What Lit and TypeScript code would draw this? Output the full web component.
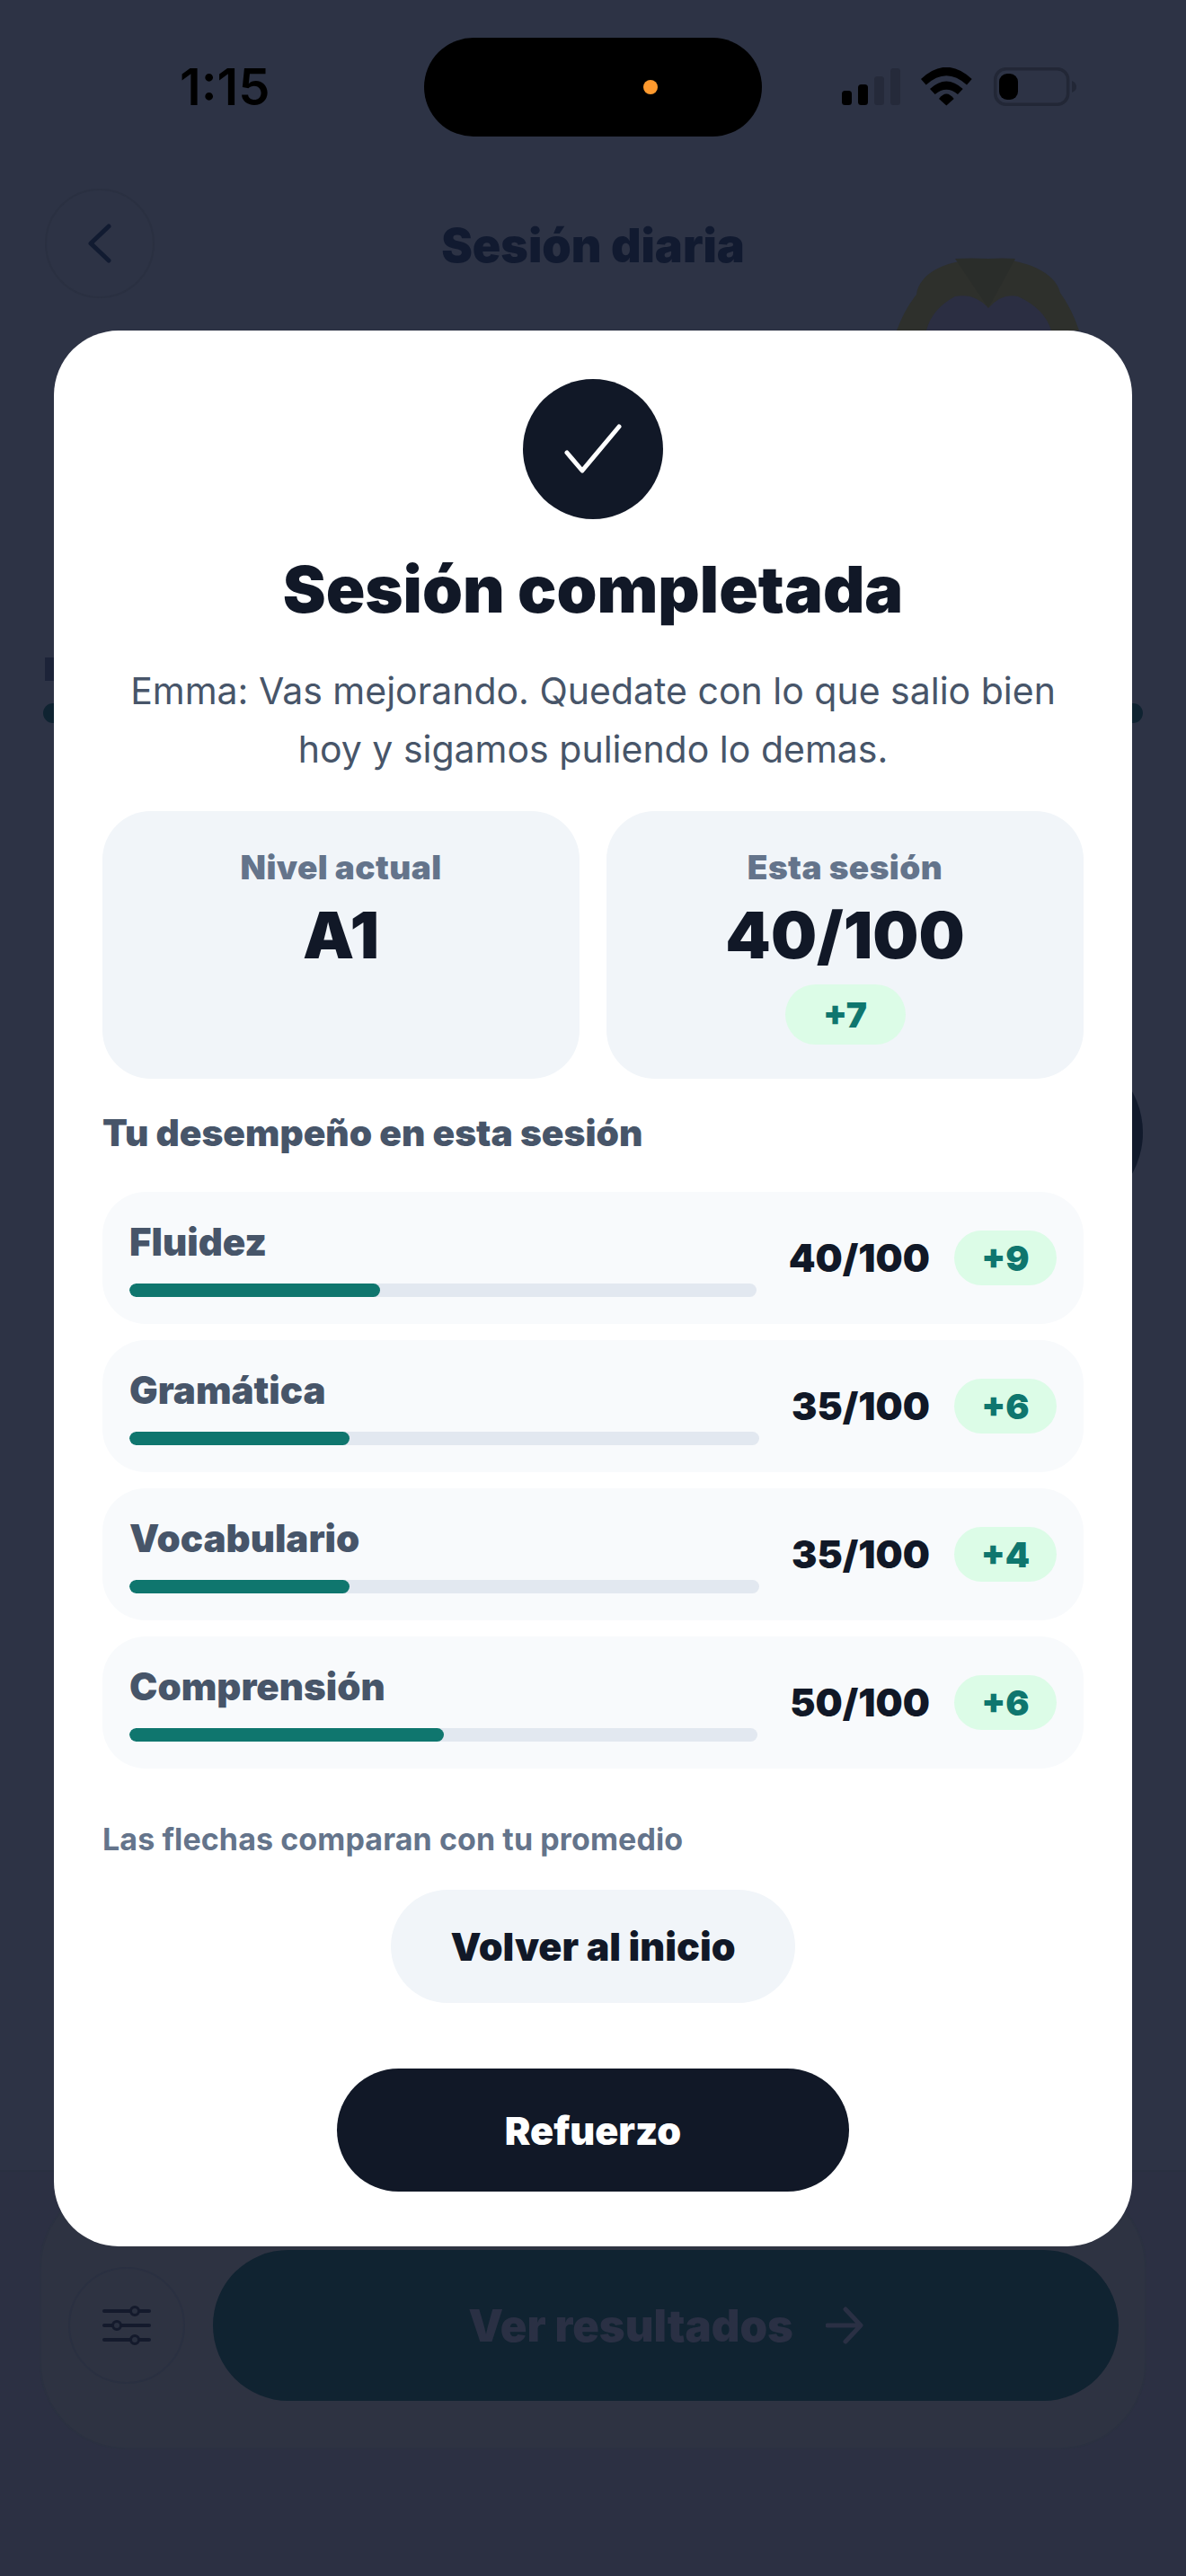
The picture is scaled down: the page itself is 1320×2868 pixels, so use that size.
import { LitElement, html, css, svg } from "lit";
import { customElement } from "lit/decorators.js";

const ROWS = [
  { name: "Fluidez", score: 40, delta: 9 },
  { name: "Gramática", score: 35, delta: 6 },
  { name: "Vocabulario", score: 35, delta: 4 },
  { name: "Comprensión", score: 50, delta: 6 },
];

@customElement("app-root")
export class AppRoot extends LitElement {
  static styles = css`
    :host {
      display: block;
      width: 1320px;
      height: 2868px;
      position: relative;
      overflow: hidden;
      background: #2d3345;
      font-family: Inter, "Liberation Sans", sans-serif;
    }
    .page {
      height: 2868px;
      display: flex;
      flex-direction: column;
    }
    .status {
      height: 194px;
      padding: 42px 0 0 200px;
      box-sizing: border-box;
      display: flex;
      align-items: flex-start;
    }
    .time {
      width: 272px;
      height: 110px;
      display: flex;
      align-items: center;
      font-size: 56px;
      font-weight: 600;
      color: #000;
    }
    .island {
      width: 376px;
      height: 110px;
      border-radius: 55px;
      background: #000;
      display: flex;
      align-items: center;
      padding-left: 244px;
      box-sizing: border-box;
      flex: none;
    }
    .dot {
      width: 16px;
      height: 16px;
      border-radius: 50%;
      background: #ff9a2e;
    }
    .sys {
      margin-left: 89px;
      margin-top: 33px;
      display: block;
      flex: none;
    }
    .head {
      height: 140px;
      padding: 16px 50px 0;
      position: relative;
      display: flex;
      align-items: flex-start;
    }
    .back {
      width: 122px;
      height: 122px;
      border: 2px solid #2a3041;
      box-sizing: border-box;
      border-radius: 50%;
      display: flex;
      align-items: center;
      justify-content: center;
    }
    .head-title {
      position: absolute;
      left: 0;
      right: 0;
      top: 48px;
      text-align: center;
      font-size: 52px;
      line-height: 64px;
      font-weight: 900;
      color: #111a30;
    }
    .penguin {
      position: absolute;
      left: 993px;
      top: 284px;
    }
    .behind-bar {
      position: absolute;
      left: 48px;
      top: 783px;
      width: 1224px;
      height: 22px;
      border-radius: 11px;
      background: #0f2331;
    }
    .behind-label {
      position: absolute;
      left: 50px;
      top: 732px;
      width: 20px;
      height: 26px;
      background: #1c2338;
    }
    .behind-circle {
      position: absolute;
      left: 1084px;
      top: 1167px;
      width: 188px;
      height: 188px;
      border-radius: 50%;
      background: #111a2c;
    }
    .spacer {
      flex: 1;
    }
    .footer {
      height: 452px;
      box-sizing: border-box;
      border-top: 2px solid #2a3041;
      padding: 10px 44px 0;
      background: #2c3043;
    }
    .dock {
      height: 299px;
      box-sizing: border-box;
      border: 2px solid #2b3141;
      border-radius: 96px;
      background: #2e3342;
      padding: 75px 29px 0 30px;
      display: flex;
      align-items: flex-start;
      gap: 31px;
    }
    .filter {
      width: 130px;
      height: 130px;
      margin-top: 19px;
      flex: none;
      border: 2px solid #2a3041;
      box-sizing: border-box;
      border-radius: 50%;
      display: flex;
      align-items: center;
      justify-content: center;
    }
    .go {
      flex: 1;
      height: 168px;
      border-radius: 84px;
      background: #102331;
      display: flex;
      align-items: center;
      justify-content: center;
      gap: 36px;
      font-size: 49px;
      font-weight: 900;
      color: #2a3044;
    }
    .modal {
      position: absolute;
      left: 60px;
      top: 368px;
      width: 1200px;
      height: 2133px;
      box-sizing: border-box;
      border-radius: 72px;
      background: #fff;
      padding: 54px 54px 0;
      display: flex;
      flex-direction: column;
      align-items: stretch;
    }
    .check {
      width: 156px;
      height: 156px;
      border-radius: 50%;
      background: #111827;
      align-self: center;
      display: flex;
      align-items: center;
      justify-content: center;
      flex: none;
    }
    h1 {
      margin: 33px 0 0;
      text-align: center;
      font-size: 72px;
      line-height: 90px;
      font-weight: 900;
      color: #111827;
    }
    .desc {
      margin: 36px 0 0;
      text-align: center;
      font-size: 41px;
      line-height: 65px;
      font-weight: 400;
      color: #475569;
    }
    .cards {
      margin-top: 36px;
      display: grid;
      grid-template-columns: 1fr 1fr;
      gap: 30px;
    }
    .card {
      height: 298px;
      box-sizing: border-box;
      border-radius: 54px;
      background: #f1f5f9;
      padding: 41px 24px 0;
      text-align: center;
    }
    .card-label {
      font-size: 37px;
      line-height: 44px;
      font-weight: 900;
      letter-spacing: 0.4px;
      color: #64748b;
    }
    .card-value {
      margin-top: 13px;
      font-size: 72px;
      line-height: 80px;
      font-weight: 900;
      color: #111827;
    }
    .pill {
      display: inline-flex;
      align-items: center;
      justify-content: center;
      border-radius: 40px;
      background: #dcfce7;
      color: #0f766e;
      font-weight: 900;
      font-size: 39px;
    }
    .card .pill {
      width: 134px;
      height: 67px;
      margin-top: 15px;
    }
    h2 {
      margin: 36px 0 0;
      font-size: 40.700px;
      line-height: 50px;
      font-weight: 900;
      color: #475569;
    }
    .rows {
      margin-top: 40px;
      display: flex;
      flex-direction: column;
      gap: 18px;
    }
    .row {
      height: 147px;
      box-sizing: border-box;
      border-radius: 48px;
      background: #f8fafc;
      padding: 0 30px;
      display: flex;
      align-items: center;
      gap: 27px;
    }
    .row-main {
      flex: 1;
      min-width: 0;
      margin-right: 9px;
    }
    .row-name {
      font-size: 42px;
      line-height: 52px;
      font-weight: 900;
      color: #475569;
    }
    .track {
      margin-top: 20px;
      height: 15px;
      border-radius: 8px;
      background: #e2e8f0;
      overflow: hidden;
    }
    .fill {
      height: 100%;
      border-radius: 8px;
      background: #0f766e;
    }
    .score {
      font-size: 42.500px;
      font-weight: 900;
      color: #111827;
    }
    .row .pill {
      width: 114px;
      height: 61px;
    }
    .note {
      margin: 57px 0 0;
      font-size: 34px;
      line-height: 44px;
      font-weight: 700;
      letter-spacing: 0.1px;
      color: #64748b;
    }
    .btn {
      align-self: center;
      display: flex;
      align-items: center;
      justify-content: center;
      font-size: 43px;
      font-weight: 900;
      border-radius: 70px;
      flex: none;
    }
    .secondary {
      margin-top: 34px;
      width: 450px;
      height: 126px;
      background: #f1f5f9;
      color: #111827;
    }
    .primary {
      margin-top: 73px;
      width: 570px;
      height: 137px;
      background: #111827;
      color: #fff;
    }
  `;

  private sysIcons() {
    return html`<svg class="sys" width="264" height="44" viewBox="0 0 264 44">
      <rect x="0" y="26" width="11" height="16" rx="3.5" fill="#000"></rect>
      <rect x="18" y="19" width="11" height="23" rx="3.5" fill="#000"></rect>
      <rect x="36" y="10" width="11" height="32" rx="3.5" fill="#252a3a"></rect>
      <rect x="54" y="1" width="11" height="41" rx="3.5" fill="#252a3a"></rect>
      <path d="M88 13 Q116.300 -13.500 144.700 13 L139 19.500 Q116.300 -1 93.700 19.500 Z" fill="#000"></path>
      <path d="M98 24 Q116.300 7 134.700 24 L129 30 Q116.300 19.500 103.700 30 Z" fill="#000"></path>
      <path d="M108 35 Q116.300 24 124.700 35 L116.300 42.500 Z" fill="#000"></path>
      <rect x="170.700" y="1.700" width="81" height="39.500" rx="12" fill="none" stroke="#222736" stroke-width="3.5"></rect>
      <rect x="175" y="7" width="21" height="29" rx="9" fill="#000"></rect>
      <path d="M256 15 Q261 17 261 21.500 Q261 26 256 28 Z" fill="#222736"></path>
    </svg>`;
  }

  private penguin() {
    return svg`<svg class="penguin" width="240" height="90" viewBox="0 0 240 90">
      <path d="M5 84 Q14 60 27 44 C30 20 60 4 107 4 C150 4 182 20 187 42 Q200 60 208 84 Z" fill="#2e302c"></path>
      <path d="M70 4 L107 59 L137 4 Q122 3 107 4 Q88 3 70 4 Z" fill="#2a2d2a"></path>
      <path d="M38 84 Q44 60 70 46 Q92 42 107 59 Q122 42 140 46 Q170 60 177 84 Z" fill="#2b2e42"></path>
    </svg>`;
  }

  render() {
    return html`
      <div class="page">
        <div class="status">
          <div class="time">1:15</div>
          <div class="island"><span class="dot"></span></div>
          ${this.sysIcons()}
        </div>
        <div class="head">
          <div class="back">
            <svg width="36" height="52" viewBox="0 0 36 52" fill="none" stroke="#111b31" stroke-width="5" stroke-linecap="round" stroke-linejoin="round">
              <path d="M28 7 L8 26 L28 45"></path>
            </svg>
          </div>
          <div class="head-title">Sesión diaria</div>
        </div>
        ${this.penguin()}
        <div class="behind-label"></div>
        <div class="behind-bar"></div>
        <div class="behind-circle"></div>
        <div class="spacer"></div>
        <div class="footer">
          <div class="dock">
            <div class="filter">
              <svg width="54" height="44" viewBox="0 0 54 44" fill="#2a3040" stroke="#141a2c" stroke-linecap="round">
                <path d="M2 6 H52 M2 22 H52 M2 38 H52" stroke-width="4" fill="none"></path>
                <circle cx="36" cy="6" r="4.500" stroke-width="3"></circle>
                <circle cx="16" cy="22" r="4.500" stroke-width="3"></circle>
                <circle cx="36" cy="38" r="4.500" stroke-width="3"></circle>
              </svg>
            </div>
            <div class="go">
              <span>Ver resultados</span>
              <svg width="42" height="42" viewBox="0 0 42 42" fill="none" stroke="#2a3044" stroke-width="5" stroke-linecap="round" stroke-linejoin="round">
                <path d="M2 21 H38 M22 3 L39 21 L22 39"></path>
              </svg>
            </div>
          </div>
        </div>
      </div>
      <div class="modal">
        <div class="check">
          <svg width="64" height="56" viewBox="0 0 64 56" fill="none" stroke="#fff" stroke-width="5" stroke-linecap="round" stroke-linejoin="round">
            <path d="M3 32 L20 52 L61 3"></path>
          </svg>
        </div>
        <h1>Sesión completada</h1>
        <p class="desc">Emma: Vas mejorando. Quedate con lo que salio bien<br />hoy y sigamos puliendo lo demas.</p>
        <div class="cards">
          <div class="card">
            <div class="card-label">Nivel actual</div>
            <div class="card-value">A1</div>
          </div>
          <div class="card">
            <div class="card-label">Esta sesión</div>
            <div class="card-value">40/100</div>
            <span class="pill">+7</span>
          </div>
        </div>
        <h2>Tu desempeño en esta sesión</h2>
        <div class="rows">
          ${ROWS.map(
            (r) => html`<div class="row">
              <div class="row-main">
                <div class="row-name">${r.name}</div>
                <div class="track"><div class="fill" style="width:${r.score}%"></div></div>
              </div>
              <div class="score">${r.score}/100</div>
              <span class="pill">+${r.delta}</span>
            </div>`
          )}
        </div>
        <p class="note">Las flechas comparan con tu promedio</p>
        <div class="btn secondary">Volver al inicio</div>
        <div class="btn primary">Refuerzo</div>
      </div>
    `;
  }
}
